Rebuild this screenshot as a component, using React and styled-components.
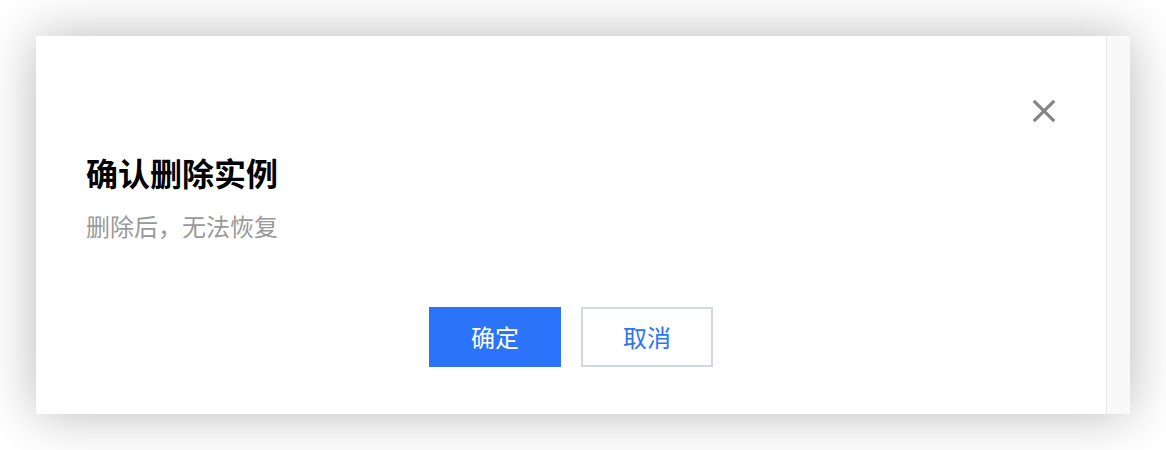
import React from "react";
import styled, { createGlobalStyle } from "styled-components";

const GlobalStyle = createGlobalStyle`
  html, body {
    margin: 0;
    padding: 0;
    background: #ffffff;
    font-family: "Noto Sans CJK SC", "Noto Sans", sans-serif;
  }
`;

const Page = styled.div`
  padding: 36px 36px 36px 36px;
  width: 1166px;
  box-sizing: border-box;
`;

const Dialog = styled.div`
  position: relative;
  display: flex;
  width: 1094px;
  height: 378px;
  background: #ffffff;
  box-shadow: 0 0 50px rgba(0, 0, 0, 0.28);
`;

const Content = styled.div`
  flex: 1;
  display: flex;
  flex-direction: column;
  padding: 112px 50px 47px 50px;
  box-sizing: border-box;
`;

const ScrollTrack = styled.div`
  width: 23px;
  border-left: 1px solid #e6e6e6;
  background: #f9f9f9;
`;

const Title = styled.h2`
  margin: 0;
  font-size: 32px;
  line-height: 48px;
  font-weight: 700;
  color: #000000;
`;

const Message = styled.p`
  margin: 12px 0 0 0;
  font-size: 24px;
  line-height: 36px;
  color: #999999;
`;

const Footer = styled.div`
  margin-top: auto;
  display: flex;
  justify-content: center;
  gap: 20px;
`;

const Button = styled.button`
  width: 132px;
  height: 60px;
  box-sizing: border-box;
  font-family: inherit;
  font-size: 24px;
  line-height: 1;
  cursor: pointer;
  border: 2px solid ${(p) => (p.$primary ? "#2b73f8" : "#d3d7de")};
  background: ${(p) => (p.$primary ? "#2b73f8" : "#ffffff")};
  color: ${(p) => (p.$primary ? "#ffffff" : "#2b73f8")};
  padding: 0;
`;

const CloseButton = styled.button`
  position: absolute;
  top: 63px;
  right: 74px;
  width: 24px;
  height: 24px;
  padding: 0;
  border: none;
  background: transparent;
  cursor: pointer;
  display: flex;
  align-items: center;
  justify-content: center;
`;

export default function App() {
  return (
    <>
      <GlobalStyle />
      <Page>
        <Dialog>
          <Content>
            <Title>确认删除实例</Title>
            <Message>删除后，无法恢复</Message>
            <Footer>
              <Button $primary>确定</Button>
              <Button>取消</Button>
            </Footer>
          </Content>
          <ScrollTrack />
          <CloseButton aria-label="关闭">
            <svg width="24" height="24" viewBox="0 0 24 24">
              <path
                d="M1.8 1.8 L22.2 22.2 M22.2 1.8 L1.8 22.2"
                stroke="#858585"
                strokeWidth="3.2"
                fill="none"
              />
            </svg>
          </CloseButton>
        </Dialog>
      </Page>
    </>
  );
}
